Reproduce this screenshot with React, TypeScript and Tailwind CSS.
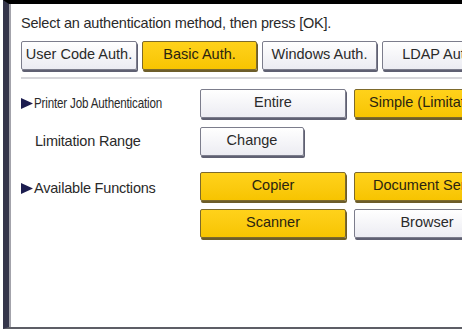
import type { ReactNode } from "react"

function Btn({ children, on, className = "" }: { children: ReactNode; on?: boolean; className?: string }) {
  return (
    <div
      className={`flex h-[29px] shrink-0 items-center justify-center overflow-hidden whitespace-nowrap rounded-[2px] border pb-[1px] text-[14.5px] ${
        on
          ? "border-[#7d6a2c] bg-gradient-to-b from-[#ffd21a] to-[#f7c400] text-[#2a2410] shadow-[1px_2px_0_#6d5d2a]"
          : "border-[#7c7d8c] bg-gradient-to-b from-white to-[#ececf2] text-[#2a2a2a] shadow-[1px_2px_0_#5f6072]"
      } ${className}`}
    >
      {children}
    </div>
  )
}

function Arrow() {
  return (
    <svg width="12" height="11" viewBox="0 0 12 11" className="mr-[1px] shrink-0">
      <path d="M0 0 L12 5.5 L0 11 Z" fill="#1c1d4f" />
    </svg>
  )
}

export default function App() {
  return (
    <div className="h-[329px] w-[462px] overflow-hidden bg-white pl-[3px] font-['Liberation_Sans',sans-serif] text-[#2a2a2a]">
      <div className="h-full border-b-2 border-l-[6px] border-t-4 border-b-[#5d5e66] border-l-[#34354a] border-t-black">
        <div className="h-full border-l-2 border-l-[#a3a3ab] pl-[10px] pt-[10px]">
          <p className="whitespace-nowrap text-[14.5px] leading-[18px] tracking-[-0.2px]">
            Select an authentication method, then press [OK].
          </p>

          <div className="mt-[9px] flex gap-[5px]">
            <Btn className="w-[116px]">User Code Auth.</Btn>
            <Btn on className="w-[115px]">Basic Auth.</Btn>
            <Btn className="w-[115px]">Windows Auth.</Btn>
            <Btn className="w-[115px]">LDAP Auth.</Btn>
          </div>

          <div className="mt-[7px] h-[2px] bg-[#d6d6da]" />

          <div className="mt-[10px] flex items-center">
            <div className="flex w-[179px] shrink-0 items-center">
              <Arrow />
              <span className="inline-block origin-left scale-x-[0.8] whitespace-nowrap text-[14.5px] tracking-[-0.2px]">
                Printer Job Authentication
              </span>
            </div>
            <div className="flex shrink-0 gap-[8px]">
              <Btn className="w-[146px]">Entire</Btn>
              <Btn on className="w-[146px] justify-start pl-[14px]">Simple (Limitation)</Btn>
            </div>
          </div>

          <div className="mt-[9px] flex items-center">
            <span className="w-[179px] shrink-0 pl-[14px] text-[14.5px] tracking-[-0.2px]">Limitation Range</span>
            <Btn className="w-[104px]">Change</Btn>
          </div>

          <div className="mt-[16px] flex items-start">
            <div className="flex w-[179px] shrink-0 items-center pt-[6px]">
              <Arrow />
              <span className="whitespace-nowrap text-[14.5px] tracking-[-0.2px]">Available Functions</span>
            </div>
            <div className="grid shrink-0 grid-cols-[146px_146px] gap-x-[8px] gap-y-[8px]">
              <Btn on>Copier</Btn>
              <Btn on className="justify-start pl-[18px]">Document Server</Btn>
              <Btn on>Scanner</Btn>
              <Btn>Browser</Btn>
            </div>
          </div>
        </div>
      </div>
    </div>
  )
}
